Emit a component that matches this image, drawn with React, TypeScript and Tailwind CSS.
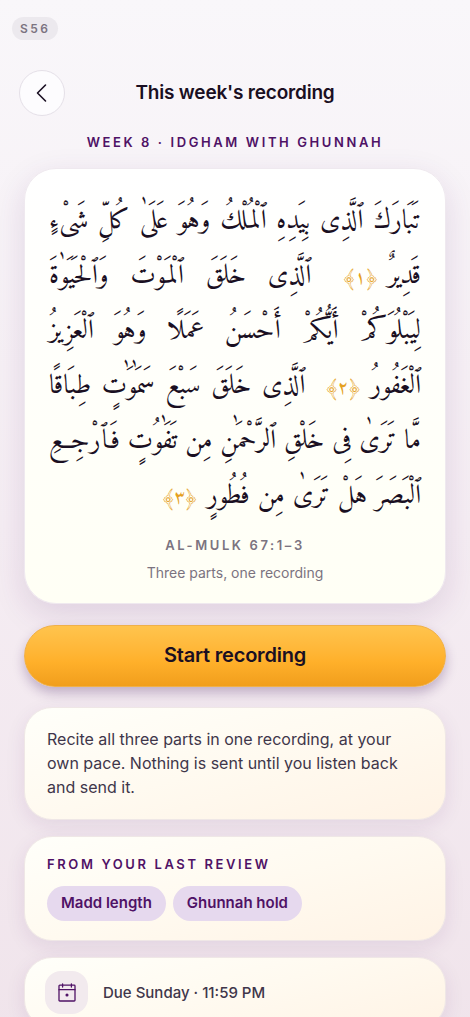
import { ReactNode } from "react";
import clsx from "clsx";

type Verse = {
    text: string;
    marker?: string;
    rest?: string;
}

const lines: Verse[] = [
    { text: "تَبَارَكَ ٱلَّذِى بِيَدِهِ ٱلْمُلْكُ وَهُوَ عَلَىٰ كُلِّ شَىْءٍ" },
    { text: "قَدِيرٌ", marker: "﴿١﴾", rest: "ٱلَّذِى خَلَقَ ٱلْمَوْتَ وَٱلْحَيَوٰةَ" },
    { text: "لِيَبْلُوَكُمْ أَيُّكُمْ أَحْسَنُ عَمَلًا وَهُوَ ٱلْعَزِيزُ" },
    { text: "ٱلْغَفُورُ", marker: "﴿٢﴾", rest: "ٱلَّذِى خَلَقَ سَبْعَ سَمَٰوَٰتٍ طِبَاقًا" },
    { text: "مَّا تَرَىٰ فِى خَلْقِ ٱلرَّحْمَٰنِ مِن تَفَٰوُتٍ فَٱرْجِعِ" },
    { text: "ٱلْبَصَرَ هَلْ تَرَىٰ مِن فُطُورٍ", marker: "﴿٣﴾" },
];

const reviewTags = ["Madd length", "Ghunnah hold"];

const Card = ({ children, className }: { children: ReactNode, className?: string }) => (
    <section
        className={clsx(
            "rounded-[28px] border border-[#efe7e6] bg-linear-165 from-[#fffffa] via-[#fffaf0] to-[#fff3e5] shadow-[0_6px_20px_rgba(76,20,100,0.09)]",
            className
        )}
    >
        {children}
    </section>
)

const BackIcon = () => (
    <svg width="24" height="24" viewBox="0 0 24 24" fill="none" stroke="currentColor" strokeWidth="1.6" strokeLinecap="round" strokeLinejoin="round" aria-hidden="true">
        <path d="M15.5 4 7.5 12l8 8" />
    </svg>
)

const CalendarIcon = () => (
    <svg width="20" height="20" viewBox="0 0 20 20" fill="none" stroke="currentColor" strokeWidth="1.3" strokeLinecap="round" strokeLinejoin="round" aria-hidden="true">
        <rect x="2" y="2.2" width="16" height="15.8" rx="0.8" />
        <path d="M2 6.7h16M5.6 1v3M14.4 1v3" />
        <circle cx="10" cy="12" r="0.9" fill="currentColor" />
    </svg>
)

export default function App() {
    return (
        <main className="min-h-screen overflow-hidden bg-linear-to-b from-[#f9f7fa] via-[#f5edf3] via-50% to-[#f0e4eb] font-['Inter',sans-serif] text-[#1a0f22]">
            <div className="flex px-3 pt-[17px]">
                <span className="flex h-[23px] items-center rounded-full bg-[#ece9ee] px-2 text-xs font-semibold tracking-[0.2em] text-[#7b7380]">
                    S56
                </span>
            </div>

            <header className="mt-[30px] grid grid-cols-[46px_1fr_46px] items-center px-[19px]">
                <button
                    type="button"
                    aria-label="Back"
                    className="flex size-[46px] cursor-pointer items-center justify-center rounded-full border border-[#e5e0e8] bg-[#fdfcfe]"
                >
                    <BackIcon />
                </button>
                <h1 className="text-center text-[19px] leading-7 font-semibold tracking-[-0.01em]">This week's recording</h1>
            </header>

            <div className="px-6 pb-6">
                <p className="mt-4 text-center text-[13px] leading-5 font-semibold tracking-[0.2em] text-[#4f1266] uppercase">
                    Week 8 · Idgham with Ghunnah
                </p>

                <section className="mt-4 rounded-[32px] border border-[#efe9ef] bg-linear-to-b from-white to-[#fffff5] px-6 pt-[25px] pb-5 shadow-[0_10px_32px_rgba(76,20,100,0.13)]">
                    <div dir="rtl" lang="ar" className="font-['Amiri','Noto_Naskh_Arabic',serif] text-[27px] leading-[55px]">
                        {lines.map((line, i) => (
                            <p
                                key={line.text}
                                className={clsx("whitespace-nowrap", i < lines.length - 1 && "[text-align-last:justify]")}
                            >
                                {line.text}
                                {line.marker ? <span className="mr-2 ml-2 inline-block font-['Amiri_Quran','Amiri',serif] text-[19px] leading-none text-[#e5a020]">{line.marker}</span> : null}
                                {line.rest ? <> {line.rest}</> : null}
                            </p>
                        ))}
                    </div>
                    <p className="mt-[11px] text-center text-[13px] leading-5 font-semibold tracking-[0.2em] text-[#7b7380] uppercase">
                        Al-Mulk 67:1–3
                    </p>
                    <p className="mt-2 text-center text-sm leading-5 text-[#7b7380]">Three parts, one recording</p>
                </section>

                <button
                    type="button"
                    className="mt-[21px] h-[62px] w-full cursor-pointer rounded-full border border-[#efb04a] bg-linear-to-b from-[#ffc44d] via-[#ffb02a] via-60% to-[#f19e1c] pb-[2px] text-xl font-semibold tracking-[-0.01em] shadow-[0_6px_12px_rgba(60,20,90,0.28)]"
                >
                    Start recording
                </button>

                <Card className="mt-5 px-[22px] pt-[19px] pb-5">
                    <p className="text-base leading-6 text-[#40364a]">
                        Recite all three parts in one recording, at your own pace. Nothing is sent until you listen back and send it.
                    </p>
                </Card>

                <Card className="mt-4 px-[22px] pt-[17px] pb-[19px]">
                    <h2 className="text-[13px] leading-5 font-semibold tracking-[0.2em] text-[#4f1266] uppercase">
                        From your last review
                    </h2>
                    <ul className="mt-3 flex flex-wrap gap-[7px]">
                        {reviewTags.map(tag => (
                            <li key={tag} className="flex h-[35px] items-center rounded-full bg-[#e6d9ee] px-[14px] text-[15px] font-semibold text-[#4f1266]">
                                {tag}
                            </li>
                        ))}
                    </ul>
                </Card>

                <Card className="mt-4 flex items-center gap-[15px] px-5 py-[13px]">
                    <span className="flex size-[43px] items-center justify-center rounded-2xl bg-[#f2eaee] text-[#4f1266]">
                        <CalendarIcon />
                    </span>
                    <p className="text-[15px] leading-5 font-medium text-[#40364a]">Due Sunday · 11:59 PM</p>
                </Card>
            </div>
        </main>
    )
}
